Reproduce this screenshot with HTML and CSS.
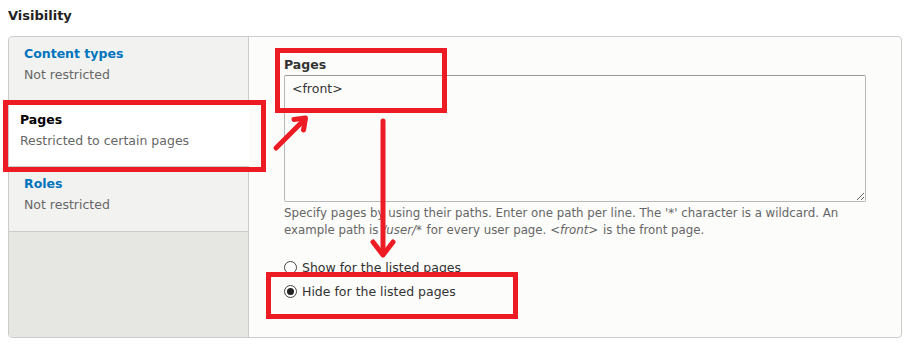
FILE: index.html
```html
<!DOCTYPE html>
<html lang="en">
  <head>
    <meta charset="UTF-8" />
    <meta name="viewport" content="width=device-width, initial-scale=1.0" />
    <title>Visibility</title>
    <link rel="stylesheet" href="styles.css">
  </head>

  <body>
    <div class="page">
      <h2 class="fieldset-title">Visibility</h2>

      <div class="vtabs">
        <ul class="vtabs-menu">
          <li class="vtab">
            <a class="vtab-title" href="#">Content types</a>
            <span class="vtab-summary">Not restricted</span>
          </li>
          <li class="vtab is-selected">
            <a class="vtab-title" href="#">Pages</a>
            <span class="vtab-summary">Restricted to certain pages</span>
          </li>
          <li class="vtab">
            <a class="vtab-title" href="#">Roles</a>
            <span class="vtab-summary">Not restricted</span>
          </li>
        </ul>

        <div class="vtabs-pane">
          <label class="form-label" for="pages">Pages</label>
          <textarea class="form-textarea" id="pages">&lt;front&gt;</textarea>
          <div class="description">
            Specify pages by using their paths. Enter one path per line. The '*' character is a wildcard. An
            example path is <em>/user/*</em> for every user page. <em>&lt;front&gt;</em> is the front page.
          </div>

          <div class="radios">
            <label class="radio"><input type="radio" name="visibility" /> Show for the listed pages</label>
            <label class="radio"><input type="radio" name="visibility" checked /> Hide for the listed pages</label>
          </div>
        </div>
      </div>

      <!-- red markup drawn over the screenshot -->
      <svg class="annotations" width="920" height="350" viewBox="0 0 920 350">
        <g fill="none" stroke="#ed1c24" stroke-width="5">
          <rect x="5.5" y="102.5" width="258" height="67" />
          <rect x="277.5" y="50.5" width="167" height="60" />
          <rect x="268.5" y="274.5" width="247" height="42" />
        </g>
        <g fill="none" stroke="#ed1c24" stroke-width="5" stroke-linecap="round" stroke-linejoin="round">
          <line x1="276" y1="148" x2="304" y2="120" />
          <polyline points="294,119.5 305.5,118 303.5,130" />
          <line x1="383" y1="121" x2="383" y2="254" />
          <polyline points="373,242 383,255 393,242" />
        </g>
      </svg>
    </div>
  </body>
</html>
```

FILE: styles.css
```css
body {
  margin: 0;
  background: #fff;
  font-family: "DejaVu Sans", sans-serif;
  color: #333;
}

.page {
  position: relative;
  padding: 8px;
}

.fieldset-title {
  margin: 0 0 12px;
  font-size: 13px;
  line-height: 16px;
  font-weight: bold;
  color: #222;
}

.vtabs {
  display: flex;
  width: 894px;
  height: 302px;
  box-sizing: border-box;
  border: 1px solid #ccc;
  border-radius: 4px;
  background: #fcfcfa;
}

.vtabs-menu {
  list-style: none;
  margin: 0;
  padding: 0;
  width: 239px;
  flex-shrink: 0;
  background: #e6e6e2;
  border-right: 1px solid #ccc;
  border-radius: 4px 0 0 4px;
}

.vtab {
  display: flex;
  flex-direction: column;
  height: 65px;
  box-sizing: border-box;
  padding: 8px 15px 0;
  background: #f2f2f0;
  border-bottom: 1px solid #ccc;
}

.vtab:first-child {
  border-radius: 4px 0 0 0;
}

.vtab.is-selected {
  background: #fff;
  padding-left: 11px;
  padding-top: 9px;
  margin-right: -1px;
}

.vtab-title {
  font-size: 12.5px;
  line-height: 18px;
  font-weight: bold;
  color: #0074bd;
  text-decoration: none;
}

.is-selected .vtab-title {
  color: #000;
}

.vtab-summary {
  margin-top: 3px;
  font-size: 12.5px;
  line-height: 18px;
  color: #666;
}

.vtabs-pane {
  flex: 1;
  padding: 19px 35px 0;
}

.form-label {
  display: block;
  margin-bottom: 1px;
  font-size: 12.5px;
  line-height: 18px;
  font-weight: bold;
  color: #333;
}

.form-textarea {
  display: block;
  width: 100%;
  height: 127px;
  box-sizing: border-box;
  margin: 0;
  padding: 4px 7px;
  border: 1px solid #b8b8b8;
  border-top-color: #999;
  border-radius: 2px;
  background: #fcfcfa;
  font-family: "DejaVu Sans", sans-serif;
  font-size: 12.5px;
  line-height: 18px;
  color: #333;
}

.description {
  margin-top: 3px;
  font-size: 11.8px;
  line-height: 17px;
  color: #666;
}

.description em {
  font-style: italic;
  margin-right: 1px;
}

.radios {
  margin-top: 16px;
  display: flex;
  flex-direction: column;
}

.radio {
  display: flex;
  align-items: center;
  gap: 5px;
  height: 24px;
  font-size: 12.5px;
  color: #333;
}

.radio input {
  appearance: none;
  width: 13px;
  height: 13px;
  margin: 0;
  border: 1px solid #444;
  border-radius: 50%;
  background: #fff;
  display: grid;
  place-items: center;
}

.radio input:checked::before {
  content: "";
  width: 7px;
  height: 7px;
  border-radius: 50%;
  background: #222;
}

.annotations {
  position: absolute;
  left: 0;
  top: 0;
  pointer-events: none;
}
```
